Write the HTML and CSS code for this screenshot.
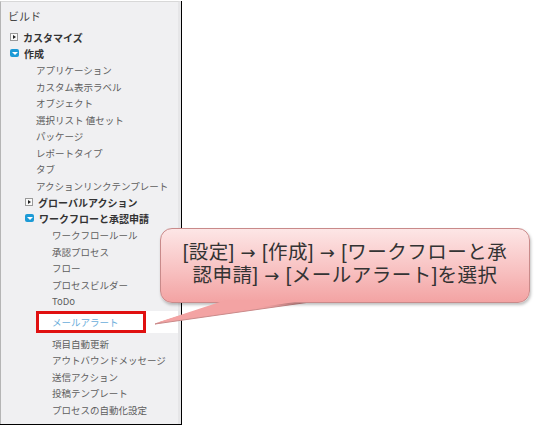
FILE: index.html
```html
<!DOCTYPE html>
<html lang="ja">
<head>
<meta charset="utf-8">
<link rel="stylesheet" href="styles.css">
</head>
<body>
<div class="page">
  <nav class="panel">
    <div class="title">ビルド</div>
    <div class="node"><span class="ico closed"><i></i></span><span class="head">カスタマイズ</span></div>
    <div class="node"><span class="ico open"><i></i></span><span class="head">作成</span></div>
    <ul class="l1">
      <li>アプリケーション</li>
      <li>カスタム表示ラベル</li>
      <li>オブジェクト</li>
      <li>選択リスト 値セット</li>
      <li>パッケージ</li>
      <li>レポートタイプ</li>
      <li>タブ</li>
      <li>アクションリンクテンプレート</li>
    </ul>
    <div class="node sub"><span class="ico closed"><i></i></span><span class="head">グローバルアクション</span></div>
    <div class="node sub"><span class="ico open"><i></i></span><span class="head">ワークフローと承認申請</span></div>
    <ul class="l2">
      <li>ワークフロールール</li>
      <li>承認プロセス</li>
      <li>フロー</li>
      <li>プロセスビルダー</li>
      <li>ToDo</li>
      <li class="sel">メールアラート</li>
      <li>項目自動更新</li>
      <li>アウトバウンドメッセージ</li>
      <li>送信アクション</li>
      <li>投稿テンプレート</li>
      <li>プロセスの自動化設定</li>
    </ul>
  </nav>
  <div class="redbox"></div>
  <div class="callout">
    <svg class="tail" width="160" height="30" viewBox="0 0 160 30">
      <polygon points="0,26 70,4 155,4" fill="#f3a3a3" stroke="#c98a8a" stroke-width="1"/>
    </svg>
    <div class="bubble">
      <p class="line">[設定] <span class="arr">→</span> [作成] <span class="arr">→</span> [ワークフローと承</p>
      <p class="line">認申請] <span class="arr">→</span> [メールアラート]を選択</p>
    </div>
    <svg class="tail" width="160" height="30" viewBox="0 0 160 30">
      <polygon points="1,25 71,2 153,2" fill="#f3a3a3"/>
    </svg>
  </div>
</div>
</body>
</html>
```
FILE: styles.css
```css
html, body {
  margin: 0;
  padding: 0;
  background: #ffffff;
}
.page {
  position: relative;
  width: 536px;
  height: 426px;
  overflow: hidden;
  font-family: "Noto Sans CJK JP", "Noto Sans", sans-serif;
}
.panel {
  width: 177px;
  height: 417px;
  margin-top: 1px;
  background: #f0f0f2;
  border-left: 1px solid #b5b5b5;
  border-top: 1px solid #d8d8d8;
  border-right: 3px solid #e6e6e8;
  box-shadow: 1px 0 0 #000, 0 1px 0 #000, 1px 1px 0 #000;
  padding-top: 5px;
  box-sizing: content-box;
}
.title {
  font-size: 11px;
  color: #444;
  padding-left: 7px;
  height: 22px;
  line-height: 19px;
}
.node {
  display: flex;
  align-items: center;
  height: 16px;
  padding-left: 9px;
  font-size: 10px;
  color: #333;
}
.node.sub {
  padding-left: 24px;
}
.head {
  font-weight: bold;
  margin-left: 5px;
}
.ico {
  display: inline-flex;
  align-items: center;
  justify-content: center;
  box-sizing: border-box;
}
.ico.closed {
  width: 8px;
  height: 8px;
  border: 1px solid #9a9a9a;
  background: #fafafa;
}
.ico.closed i {
  width: 0;
  height: 0;
  border-top: 2px solid transparent;
  border-bottom: 2px solid transparent;
  border-left: 3px solid #222;
  margin-left: 1px;
}
.ico.open {
  width: 9px;
  height: 8px;
  background: #1c9ad6;
  border-radius: 2px;
}
.ico.open i {
  width: 0;
  height: 0;
  border-left: 3px solid transparent;
  border-right: 3px solid transparent;
  border-top: 3px solid #ffffff;
}
ul {
  list-style: none;
  margin: 0;
  padding: 0;
}
li {
  height: 16.5px;
  line-height: 16.5px;
  font-size: 9.5px;
  color: #5e5e5e;
}
.l1 {
  padding-top: 1px;
}
.l1 li {
  padding-left: 35px;
}
.l2 {
  padding-top: 1px;
}
.l2 li {
  padding-left: 51px;
}
.l2 li.sel {
  height: 22px;
  line-height: 22px;
  margin: 1px 0 3px 36px;
  padding-left: 15px;
  background: #ffffff;
  color: #6aaedb;
}
.redbox {
  position: absolute;
  left: 36px;
  top: 311px;
  width: 110px;
  height: 22px;
  border: 3px solid #e01010;
  box-sizing: border-box;
}
.callout {
  position: absolute;
  left: 155px;
  top: 228px;
  width: 376px;
  height: 96px;
}
.bubble {
  position: absolute;
  left: 5px;
  top: 0;
  width: 370px;
  height: 75px;
  box-sizing: border-box;
  border: 1px solid #c98a8a;
  border-radius: 12px;
  background: linear-gradient(#fde6e6, #f8c2c2 55%, #f3a3a3);
  box-shadow: 1px 2px 3px rgba(0,0,0,0.25);
  color: #333333;
  text-align: center;
  padding-top: 12px;
  display: flex;
  flex-direction: column;
}
.line {
  margin: 0;
  height: 23px;
  font-family: "Liberation Sans", "Noto Sans CJK JP", sans-serif;
  font-size: 19.5px;
  letter-spacing: 0.5px;
  line-height: 23px;
  white-space: nowrap;
}
.arr {
  font-family: "DejaVu Sans", sans-serif;
  font-size: 18px;
}
.tail {
  position: absolute;
  left: 0;
  top: 70px;
}
```
